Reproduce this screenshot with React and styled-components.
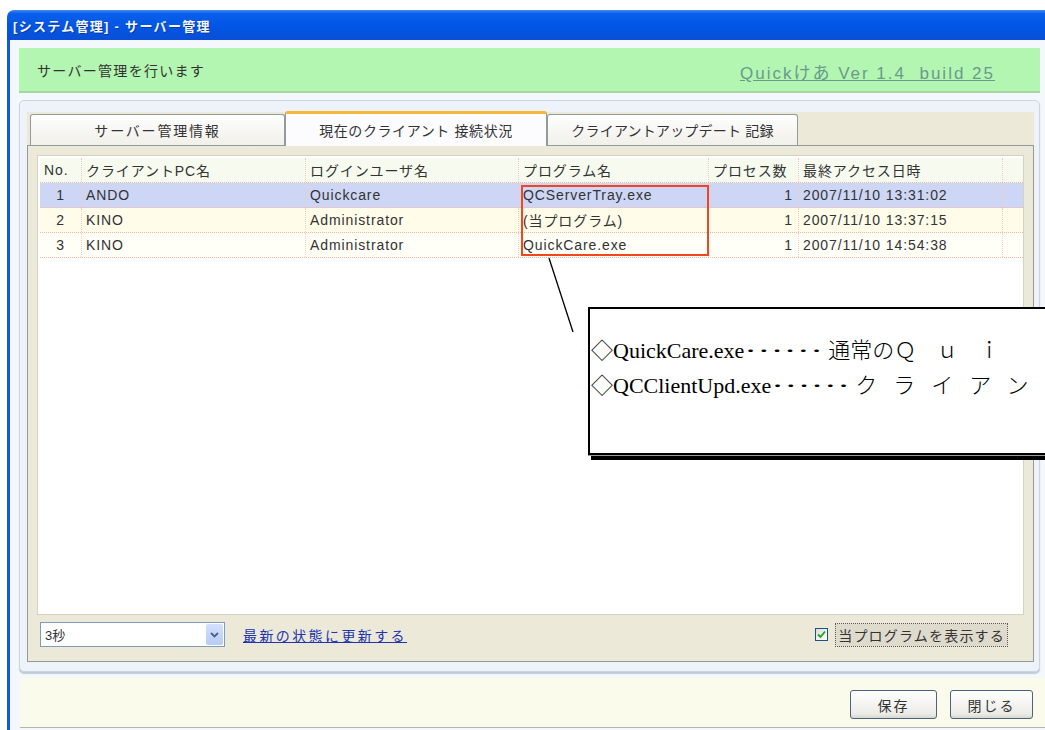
import React from 'react';
import styled, { createGlobalStyle } from 'styled-components';

const GlobalStyle = createGlobalStyle`
  html, body {
    margin: 0;
    padding: 0;
    background: #fff;
  }
  body {
    font-family: "Liberation Sans", "Noto Sans CJK JP", sans-serif;
    color: #333;
  }
`;

const Screen = styled.div`
  position: relative;
  width: 1045px;
  height: 730px;
  padding: 10px 0 0 7px;
  box-sizing: border-box;
  overflow: hidden;
  background: #fff;
`;

const Window = styled.div`
  display: flex;
  flex-direction: column;
  height: 720px;
`;

const TitleBar = styled.div`
  height: 30px;
  flex: none;
  display: flex;
  align-items: center;
  padding-left: 6px;
  border-radius: 7px 0 0 0;
  background: linear-gradient(to bottom, #3d8cf7 0%, #0a5fe9 12%, #0055e5 55%, #0a4fd6 100%);
  color: #f2f6ff;
  font-size: 13px;
  font-weight: bold;
  letter-spacing: 1.3px;
  text-shadow: 1px 1px 0 #0a3a9a;
`;

const Body = styled.div`
  flex: 1;
  display: flex;
  flex-direction: column;
  border-left: 3px solid #1559dd;
  background: #f4f7fc;
  padding: 8px 5px 0 9px;
`;

const Banner = styled.div`
  height: 45px;
  flex: none;
  box-sizing: border-box;
  display: flex;
  align-items: center;
  justify-content: space-between;
  padding: 0 45px 0 18px;
  background: #b3f6b1;
  border-bottom: 2px solid #a3d9a1;
  font-size: 14px;
  letter-spacing: 1.3px;
`;

const VersionLink = styled.a`
  color: #6a9a8c;
  font-size: 17px;
  letter-spacing: 2px;
  text-decoration: underline;
  margin-top: 4px;
`;

const Panel = styled.div`
  margin-top: 7px;
  height: 572px;
  flex: none;
  box-sizing: border-box;
  padding: 9px 5px 9px 7px;
  background: #eef3fa;
  border: 1px solid #c9d5e5;
  border-radius: 5px;
  box-shadow: 0 2px 1px #c2cad6;
`;

const TabControl = styled.div`
  height: 100%;
  display: flex;
  flex-direction: column;
`;

const TabRow = styled.div`
  height: 35px;
  flex: none;
  display: flex;
  align-items: flex-end;
  padding-left: 3px;
  background: linear-gradient(to bottom, #eef3fa 0px, #eef3fa 2px, #ece9d8 2px);
`;

const Tab = styled.div`
  width: ${p => p.$w}px;
  height: ${p => (p.$active ? 35 : 31)}px;
  box-sizing: border-box;
  display: flex;
  align-items: center;
  justify-content: center;
  border: 1px solid #919b9c;
  border-bottom: none;
  border-top: ${p => (p.$active ? '3px solid #f5b83c' : '1px solid #919b9c')};
  border-radius: 3px 3px 0 0;
  background: ${p => (p.$active ? '#fcfcfe' : 'linear-gradient(to bottom, #fefefe, #f1f0ea)')};
  margin-bottom: ${p => (p.$active ? -1 : 0)}px;
  position: relative;
  z-index: ${p => (p.$active ? 2 : 1)};
  font-size: 14px;
  letter-spacing: ${p => p.$ls}px;
  color: #333;
`;

const TabPage = styled.div`
  flex: 1;
  display: flex;
  flex-direction: column;
  padding: 9px 9px 0 9px;
  background: #ece9d8;
  border: 1px solid #919b9c;
`;

const ListBox = styled.div`
  height: 460px;
  flex: none;
  box-sizing: border-box;
  padding: 2px 0 0 2px;
  background: #fff;
  border: 1px solid #d6d2c2;
`;

const Row = styled.div`
  display: grid;
  grid-template-columns: 42px 224px 213px 190px 90px 204px;
  height: 24px;
  background: ${p => p.$bg};
  border-bottom: 1px dotted #f0b9aa;
  font-size: 14px;
  letter-spacing: 0.9px;
  color: #333;
`;

const Cell = styled.div`
  display: flex;
  align-items: center;
  justify-content: ${p => (p.$pr ? 'flex-end' : 'flex-start')};
  padding: ${p => (p.$pr ? `0 ${p.$pr}px 0 0` : '0 0 0 4px')};
  border-right: 1px dotted #f2cbbf;
  white-space: nowrap;
  overflow: hidden;
`;

const ControlRow = styled.div`
  margin-top: 7px;
  height: 25px;
  display: flex;
  align-items: center;
`;

const Select = styled.div`
  width: 185px;
  height: 25px;
  margin-left: 3px;
  box-sizing: border-box;
  display: flex;
  align-items: center;
  justify-content: space-between;
  padding: 0 1px 0 4px;
  background: #fff;
  border: 1px solid #7f9db9;
  font-size: 13px;
  color: #333;
`;

const SelectArrow = styled.span`
  width: 17px;
  height: 21px;
  display: flex;
  align-items: center;
  justify-content: center;
  border-radius: 2px;
  background: linear-gradient(to bottom, #d4e1fc, #b6cbf6);
`;

const RefreshLink = styled.a`
  margin-left: 18px;
  color: #2034b0;
  font-size: 14px;
  letter-spacing: 2.4px;
  text-decoration: underline;
`;

const CheckWrap = styled.label`
  margin-left: auto;
  margin-right: 17px;
  display: flex;
  align-items: center;
  gap: 8px;
`;

const CheckBox = styled.span`
  width: 13px;
  height: 13px;
  box-sizing: border-box;
  display: flex;
  align-items: center;
  justify-content: center;
  border: 1px solid #1c5180;
  background: linear-gradient(135deg, #dcdcd7, #fff);
`;

const CheckLabel = styled.span`
  padding: 1px 2px;
  outline: 1px dotted #555;
  background: #dedbcd;
  font-size: 14px;
  letter-spacing: 1.2px;
  color: #333;
`;

const Footer = styled.div`
  margin: 6px -5px 0 1px;
  height: 50px;
  box-sizing: border-box;
  display: flex;
  justify-content: flex-end;
  gap: 13px;
  padding: 12px 12px 0 0;
  background: #fbfbec;
  border-bottom: 1px solid #b4b4b4;
`;

const Button = styled.button`
  width: ${p => p.$w}px;
  height: 29px;
  border: 1px solid #4a6380;
  border-radius: 3px;
  background: linear-gradient(to bottom, #ffffff, #ecebe6 85%, #d8d6cc);
  font-family: inherit;
  font-size: 14px;
  letter-spacing: 2px;
  color: #333;
`;

/* annotation drawn over the list */
const Marker = styled.div`
  position: absolute;
  left: 521px;
  top: 185px;
  width: 188px;
  height: 71px;
  box-sizing: border-box;
  border: 2px solid #f2461e;
`;

const Connector = styled.svg`
  position: absolute;
  left: 0;
  top: 0;
  pointer-events: none;
`;

const Callout = styled.div`
  position: absolute;
  left: 588px;
  top: 307px;
  width: 480px;
  height: 148px;
  box-sizing: border-box;
  padding: 23px 0 0 1px;
  background: #fff;
  border: 2px solid #000;
  box-shadow: 0 1px 0 #999, 3px 5px 0 #000;
  font-family: "Liberation Serif", "Noto Sans CJK JP", serif;
  font-size: 22px;
  line-height: 32px;
  color: #000;
  white-space: nowrap;
`;

const Jp = styled.span`
  font-family: "Noto Sans CJK JP", sans-serif;
  font-weight: 300;
  letter-spacing: ${p => p.$ls || 0}px;
`;

/* the dotted leader between a file name and its note, stretched to a wider pitch */
const Leader = styled.span`
  display: inline-block;
  width: 84px;
  position: relative;
  top: -6px;
  font-family: "Liberation Serif", serif;
  span {
    display: inline-block;
    transform: scaleX(1.8);
    transform-origin: left center;
  }
`;

const rows = [
  { no: 1, pc: 'ANDO', user: 'Quickcare', prog: 'QCServerTray.exe', n: 1, at: '2007/11/10 13:31:02', bg: '#cdd6f5' },
  { no: 2, pc: 'KINO', user: 'Administrator', prog: '(当プログラム)', n: 1, at: '2007/11/10 13:37:15', bg: '#fffcea' },
  { no: 3, pc: 'KINO', user: 'Administrator', prog: 'QuickCare.exe', n: 1, at: '2007/11/10 14:54:38', bg: '#fffef7' },
];

const App = () => {
  return (
    <Screen>
      <GlobalStyle />
      <Window>
        <TitleBar>[システム管理] - サーバー管理</TitleBar>
        <Body>
          <Banner>
            <span>サーバー管理を行います</span>
            <VersionLink href="#">Quickけあ Ver 1.4&nbsp; build 25</VersionLink>
          </Banner>
          <Panel>
            <TabControl>
              <TabRow>
                <Tab $w={255} $ls={1.8}>サーバー管理情報</Tab>
                <Tab $w={262} $ls={0.6} $active>現在のクライアント 接続状況</Tab>
                <Tab $w={251} $ls={0.2}>クライアントアップデート 記録</Tab>
              </TabRow>
              <TabPage>
                <ListBox>
                  <Row $bg="#f7fbef">
                    <Cell>No.</Cell>
                    <Cell>クライアントPC名</Cell>
                    <Cell>ログインユーザ名</Cell>
                    <Cell>プログラム名</Cell>
                    <Cell>プロセス数</Cell>
                    <Cell>最終アクセス日時</Cell>
                  </Row>
                  {rows.map(r => (
                    <Row key={r.no} $bg={r.bg}>
                      <Cell $pr={16}>{r.no}</Cell>
                      <Cell>{r.pc}</Cell>
                      <Cell>{r.user}</Cell>
                      <Cell>{r.prog}</Cell>
                      <Cell $pr={5}>{r.n}</Cell>
                      <Cell>{r.at}</Cell>
                    </Row>
                  ))}
                </ListBox>
                <ControlRow>
                  <Select>
                    <span>3秒</span>
                    <SelectArrow>
                      <svg width="9" height="6" viewBox="0 0 9 6">
                        <path d="M1 1 L4.5 4.5 L8 1" fill="none" stroke="#4d6185" strokeWidth="1.8" />
                      </svg>
                    </SelectArrow>
                  </Select>
                  <RefreshLink href="#">最新の状態に更新する</RefreshLink>
                  <CheckWrap>
                    <CheckBox>
                      <svg width="9" height="9" viewBox="0 0 9 9">
                        <path d="M1 4.5 L3.5 7 L8 1.5" fill="none" stroke="#21a121" strokeWidth="1.8" />
                      </svg>
                    </CheckBox>
                    <CheckLabel>当プログラムを表示する</CheckLabel>
                  </CheckWrap>
                </ControlRow>
              </TabPage>
            </TabControl>
          </Panel>
          <Footer>
            <Button $w={87}>保存</Button>
            <Button $w={83}>閉じる</Button>
          </Footer>
        </Body>
      </Window>

      <Marker />
      <Connector width="1045" height="730">
        <line x1="549" y1="258" x2="573" y2="332" stroke="#000" strokeWidth="1.3" />
      </Connector>
      <Callout>
        <div><Jp>◇</Jp>QuickCare.exe<Leader><span>……</span></Leader><Jp>通常の</Jp><Jp $ls={20}>Ｑｕｉ</Jp></div>
        <div><Jp>◇</Jp>QCClientUpd.exe<Leader><span>……</span></Leader><Jp $ls={16}>クライアン</Jp></div>
      </Callout>
    </Screen>
  );
};

export default App;
